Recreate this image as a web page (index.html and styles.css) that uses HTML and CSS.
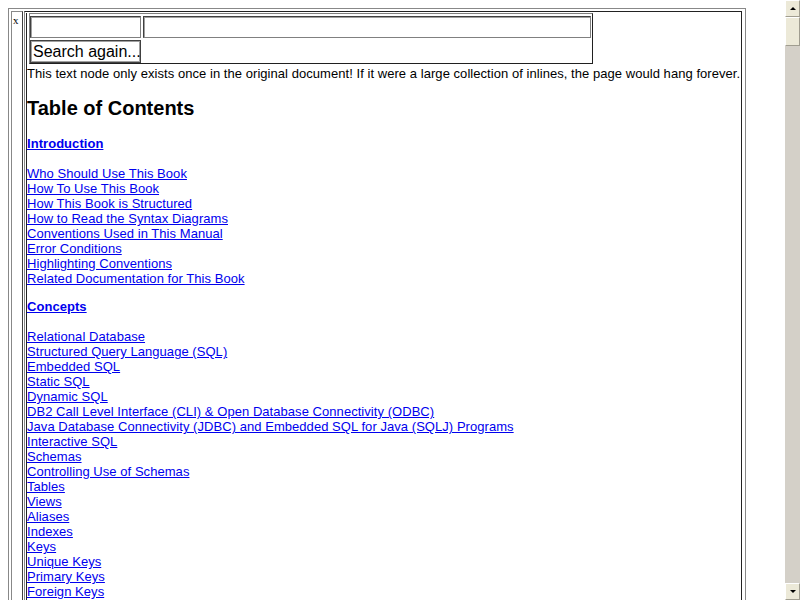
FILE: index.html
```html
<!DOCTYPE html>
<html>
<head>
<meta charset="utf-8">
<title>Table of Contents</title>
<link rel="stylesheet" href="styles.css">
</head>
<body>
<div class="viewport">
  <div class="frame">
    <div class="xcell">x</div>
    <div class="main">
      <div class="inner">
        <form class="search">
          <input class="field short" type="text">
          <input class="field long" type="text">
          <button class="btn" type="button">Search again...</button>
        </form>
        <p class="lead">This text node only exists once in the original document! If it were a large collection of inlines, the page would hang forever.</p>
        <h2 class="title">Table of Contents</h2>
        <p class="section"><a href="#">Introduction</a></p>
        <p class="links">
          <a href="#">Who Should Use This Book</a><br>
          <a href="#">How To Use This Book</a><br>
          <a href="#">How This Book is Structured</a><br>
          <a href="#">How to Read the Syntax Diagrams</a><br>
          <a href="#">Conventions Used in This Manual</a><br>
          <a href="#">Error Conditions</a><br>
          <a href="#">Highlighting Conventions</a><br>
          <a href="#">Related Documentation for This Book</a>
        </p>
        <p class="section next"><a href="#">Concepts</a></p>
        <p class="links">
          <a href="#">Relational Database</a><br>
          <a href="#">Structured Query Language (SQL)</a><br>
          <a href="#">Embedded SQL</a><br>
          <a href="#">Static SQL</a><br>
          <a href="#">Dynamic SQL</a><br>
          <a href="#">DB2 Call Level Interface (CLI) &amp; Open Database Connectivity (ODBC)</a><br>
          <a href="#">Java Database Connectivity (JDBC) and Embedded SQL for Java (SQLJ) Programs</a><br>
          <a href="#">Interactive SQL</a><br>
          <a href="#">Schemas</a><br>
          <a href="#">Controlling Use of Schemas</a><br>
          <a href="#">Tables</a><br>
          <a href="#">Views</a><br>
          <a href="#">Aliases</a><br>
          <a href="#">Indexes</a><br>
          <a href="#">Keys</a><br>
          <a href="#">Unique Keys</a><br>
          <a href="#">Primary Keys</a><br>
          <a href="#">Foreign Keys</a><br>
          <a href="#">Partitioning Keys</a><br>
          <a href="#">Constraints</a>
        </p>
      </div>
    </div>
  </div>
</div>
<div class="scrollbar">
  <div class="sb-btn"><span class="arrow up"></span></div>
  <div class="sb-track">
    <div class="sb-thumb"></div>
  </div>
  <div class="sb-btn"><span class="arrow down"></span></div>
</div>
</body>
</html>
```

FILE: styles.css
```css
html, body {
  height: 100%;
  margin: 0;
  overflow: hidden;
  background: #ffffff;
}

body {
  display: flex;
  font-family: "Liberation Sans", Arial, sans-serif;
  font-size: 13px;
  letter-spacing: 0.05px;
  color: #000000;
}

.viewport {
  flex: 1;
  padding: 8px;
  overflow: hidden;
}

.frame {
  display: inline-flex;
  align-items: stretch;
  border: 1px solid #888888;
  padding: 2px 3px 0 2px;
  gap: 1px;
  min-height: 700px;
}

.xcell {
  width: 8px;
  border: 1px solid #888888;
  border-right-color: #404040;
  padding: 2px 1px 0 1px;
  font-family: "Liberation Serif", "Times New Roman", serif;
  font-size: 11px;
  line-height: 12px;
  letter-spacing: 0;
}

.main {
  border: 1px solid #222222;
  border-left-color: #888888;
  padding: 1px 0 0 1px;
}

.inner {
  border-left: 1px solid #222222;
  padding-right: 1px;
}

.search {
  display: grid;
  grid-template-columns: 111px 448px;
  column-gap: 2px;
  row-gap: 2px;
  width: max-content;
  margin: 0 0 2px 2px;
  padding: 2px 1px 0 0;
  border: 1px solid #202020;
  border-top-color: #808080;
  border-left-color: #808080;
}

.field {
  box-sizing: border-box;
  height: 22px;
  margin: 0;
  padding: 0;
  border: 1px solid #808080;
  border-top-color: #404040;
  border-left-color: #404040;
  box-shadow: inset 1px 1px 0 #a0a0a0;
  background: #ffffff;
  font: 13px "Liberation Sans", Arial, sans-serif;
}

.short {
  width: 111px;
}

.long {
  width: 448px;
}

.btn {
  box-sizing: border-box;
  width: 111px;
  height: 23px;
  margin: 0;
  padding: 0 0 0 2px;
  text-align: left;
  white-space: nowrap;
  overflow: hidden;
  background: #ffffff;
  border: 1px solid #404040;
  box-shadow: inset 1px 1px 0 #a0a0a0, inset -1px -1px 0 #a0a0a0;
  font: 16px "Liberation Sans", Arial, sans-serif;
  letter-spacing: 0;
  color: #000000;
  line-height: 20px;
}

.lead {
  margin: 0;
  line-height: 15px;
}

.title {
  margin: 16px 0 16px 0;
  font-size: 20px;
  line-height: 23px;
  font-weight: bold;
  letter-spacing: 0;
}

.section {
  margin: 0 0 15px 0;
  line-height: 15px;
  font-weight: bold;
}

.section.next {
  margin-top: 13px;
}

.links {
  margin: 0;
  line-height: 15px;
}

a {
  color: #0000ee;
  text-decoration: underline;
}

.scrollbar {
  width: 15px;
  flex: none;
  display: flex;
  flex-direction: column;
  background: #d4d0c8;
}

.sb-btn {
  box-sizing: border-box;
  height: 17px;
  flex: none;
  background: #ece9d8;
  border: 1px solid #ffffff;
  border-right-color: #a09d90;
  border-bottom-color: #a09d90;
  display: flex;
  align-items: center;
  justify-content: center;
}

.sb-track {
  flex: 1;
}

.sb-thumb {
  box-sizing: border-box;
  height: 29px;
  background: #ece9d8;
  border: 1px solid #ffffff;
  border-right-color: #a09d90;
  border-bottom-color: #a09d90;
}

.arrow {
  width: 0;
  height: 0;
  border-left: 3px solid transparent;
  border-right: 3px solid transparent;
}

.arrow.up {
  border-bottom: 3px solid #000000;
}

.arrow.down {
  border-top: 3px solid #000000;
}
```
